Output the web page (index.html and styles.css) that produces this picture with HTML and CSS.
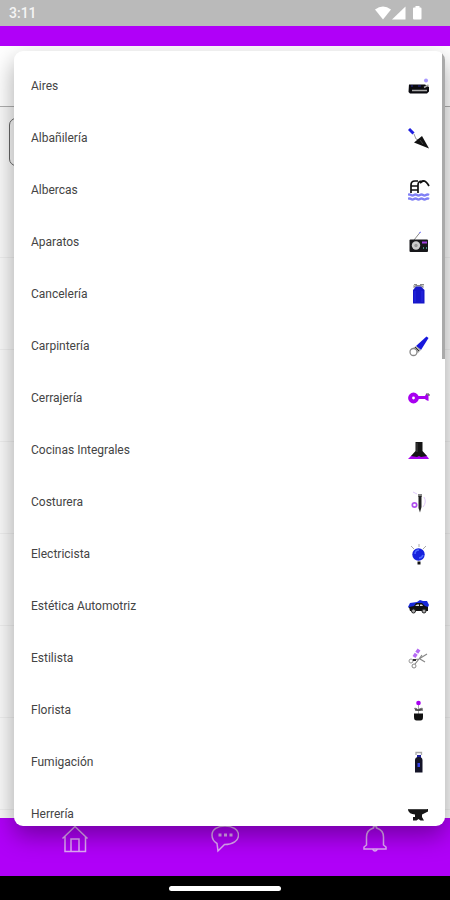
FILE: index.html
```html
<!DOCTYPE html>
<html lang="es">
<head>
<meta charset="utf-8">
<meta name="viewport" content="width=device-width, initial-scale=1">
<title>Servicios</title>
<link rel="stylesheet" href="styles.css">
</head>
<body>
<header class="status">
  <span class="clock">3:11</span>
  <svg class="status-icons" viewBox="0 0 48 16" aria-hidden="true">
    <path d="M0 4.500Q8-1.500 16 4.500L8 14.500Z"/>
    <path d="M17 14.500L30.500 1.500V14.500Z"/>
    <path d="M38 3.500q0-1 1-1h1.500V1h4v1.500h1q1 0 1 1v10q0 1-1 1h-6.500q-1 0-1-1Z"/>
  </svg>
</header>
<div class="appbar"></div>
<main class="page">
  <div class="page-head"></div>
  <div class="field"></div>
  <div class="cards">
    <div class="card"></div><div class="card"></div><div class="card"></div><div class="card"></div><div class="card"></div><div class="card"></div><div class="card"></div>
  </div>
</main>
<nav class="tabs">
  <a class="tab" href="#inicio" aria-label="Inicio"><svg viewBox="0 0 28 28"><path d="M1.500 13.500L14 1.500L26.500 13.500M4 11.500V26.500H10V14H18V26.500H24.500V11.500M10 26.500H18"/></svg></a>
  <a class="tab" href="#mensajes" aria-label="Mensajes"><svg viewBox="0 0 28 28"><path d="M6 18.500Q1 15.500 1 10C1 4.500 6.500 1 14 1S27.500 4.500 27.500 10S22 19.500 13.500 19.500L7 26Z"/><path class="dots" d="M7.500 8.500h3v3h-3zM13 8.500h3v3h-3zM18.500 8.500h3v3h-3z"/></svg></a>
  <a class="tab" href="#avisos" aria-label="Avisos"><svg viewBox="0 0 28 28"><path d="M12.500 3V1.500H15.500V3Q22.500 5 22.500 12V20L25 22V24H3V22L5.500 20V12Q5.500 5 12.500 3ZM11.500 24Q14 28 16.500 24"/></svg></a>
</nav>
<footer class="system"><span class="gesture"></span></footer>

<div class="menu">
  <div class="options">
    <button class="option">Aires<svg viewBox="0 0 22 22"><path d="M1 9.500H17L21 12V16.500L19 18.500H2L.500 17Z" fill="#0b0b10"/><path d="M4 15.500H19M16 12.500L20.500 10" stroke="#aaa" stroke-width="1.500"/><path d="M3 11h2M10 11h3" stroke="#26269a"/><circle cx="18" cy="5.500" r="2" fill="#a99aff"/></svg></button>
    <button class="option">Albañilería<svg viewBox="0 0 22 22"><path d="M1 2L5.500 6.500" stroke="#1f1fe0" stroke-width="3"/><path d="M6 7L8 12L11 13" stroke="#999" fill="none"/><path d="M14 9L6 15.500L21 21.500Z" fill="#111"/><path d="M12 13l3 4" stroke="#444"/></svg></button>
    <button class="option">Albercas<svg viewBox="0 0 22 22"><path d="M3 14V6Q3 2 7 2H10M10 14V6Q10 2 14 2Q18 1 21 7M3 7H10M3 11H10M12 4L15 2" stroke="#111" stroke-width="1.700" fill="none"/><path d="M0 16q1.500-1 3 0t3 0t3 0t3 0t3 0t3 0t3 0M0 20q1.500-1 3 0t3 0t3 0t3 0t3 0t3 0t3 0" stroke="#8080f5" stroke-width="2.500" fill="none"/></svg></button>
    <button class="option">Aparatos<svg viewBox="0 0 22 22"><path d="M6 9L12 1.500" stroke="#888"/><path d="M11 2l2-1" stroke="#8080ff"/><rect x="1.500" y="8.500" width="18.500" height="12.500" rx="1" fill="#17171a"/><circle cx="8" cy="14.500" r="4.200" fill="#ccc"/><circle cx="8" cy="14.500" r="1.700" fill="#999"/><path d="M14 11.500h5" stroke="#a040e0" stroke-width="2"/><path d="M15 17h1M18 17h1" stroke="#4b8b80" stroke-width="2"/></svg></button>
    <button class="option">Cancelería<svg viewBox="0 0 22 22"><path d="M5 2H16V5H5Z" fill="#c9c9c9"/><path d="M6 1.500H9M12 1.500H16M6 4L8 2.500H13L15 4" stroke="#888" fill="none"/><path d="M5 20.500V7L8 3.500H13L16.500 7V20.500Z" fill="#1717c9"/><path d="M7 8V19M14 8V19" stroke="#2b2be5"/></svg></button>
    <button class="option">Carpintería<svg viewBox="0 0 22 22"><path d="M18.500 1.500L20.500 3L13 15L8 11Z" fill="#1717dc"/><path d="M8 11L13 15L10 18L5 13Z" fill="#aaa"/><circle cx="5.500" cy="17" r="3.500" fill="#fff" stroke="#888" stroke-width="1.300"/><path d="M7 12l4 4" stroke="#333"/></svg></button>
    <button class="option">Cerrajería<svg viewBox="0 0 22 22"><path d="M9 9H17L18 7L20.500 8V14L18 13L17 12H9Z" fill="#a800f0"/><circle cx="5.500" cy="11" r="3.400" fill="none" stroke="#a800f0" stroke-width="4"/><path d="M18 7h3v2" stroke="#444" fill="none"/></svg></button>
    <button class="option">Cocinas Integrales<svg viewBox="0 0 22 22"><path d="M0 20Q3 16 7 15H15Q19 16 21 20Z" fill="#a800f0"/><path d="M7.500 3H14.500V12L19 17L13 18L11 17L9 18L3 17L7.500 12Z" fill="#151515"/><path d="M9 4V13" stroke="#444"/></svg></button>
    <button class="option">Costurera<svg viewBox="0 0 22 22"><path d="M5 1l4 2M16 6q3 5-1 10" stroke="#e0c9fa" fill="none"/><path d="M10 3h4v3h-4z" fill="#888"/><path d="M10.500 5H13.500V16L12 21.500L10.500 17Z" fill="#222"/><circle cx="6.500" cy="14" r="2.200" fill="none" stroke="#b050ee" stroke-width="1.700"/></svg></button>
    <button class="option">Electricista<svg viewBox="0 0 22 22"><path d="M3 3l3 3M18 3l-3 3M11 1v3" stroke="#aaa"/><circle cx="10.500" cy="11.500" r="6.200" fill="#1722dd"/><path d="M7 11q0-4 4-4M11 15q3 0 4-3" stroke="#4d68ff" stroke-width="1.500" fill="none"/><path d="M9.500 18.500h3v3h-3z" fill="#111"/></svg></button>
    <button class="option">Estética Automotriz<svg viewBox="0 0 22 22"><path d="M0 12L2 8L9 7L12 5L15 6L19 6L21 10L19 14L1 13Z" fill="#1728d8"/><path d="M1 12L6 11L8 8H14L17 11L20 12V16H2Z" fill="#111"/><path d="M7 11L9 9.500H11V11ZM12 9.500H14L15 11H12Z" fill="#ddd"/><circle cx="5.500" cy="16" r="2" fill="#aaa" stroke="#222"/><circle cx="16" cy="16" r="2" fill="#aaa" stroke="#222"/></svg></button>
    <button class="option">Estilista<svg viewBox="0 0 22 22"><path d="M6 10L11 2.500" stroke="#b56af3" stroke-width="3.500" stroke-dasharray="4 1"/><path d="M4 13L11 12L19 7M11 12L7 17M12 12L17 15M11 12L14 8" stroke="#888" stroke-width="1.200" fill="none"/><circle cx="3" cy="14" r="2" fill="none" stroke="#999"/><circle cx="6" cy="19" r="2" fill="none" stroke="#888"/><path d="M5 13h3" stroke="#333" stroke-width="2"/></svg></button>
    <button class="option">Florista<svg viewBox="0 0 22 22"><path d="M10.500 5V15" stroke="#aaa"/><circle cx="10.500" cy="4" r="2.300" fill="#a800f0"/><path d="M6 9Q9 8 10 11Q12 8 15 9Q14 12 10.500 12Q7 12 6 9Z" fill="#777"/><path d="M7 11h8" stroke="#222"/><path d="M6 14.500H15V18Q15 21.500 12.500 21.500H8.500Q6 21.500 6 18Z" fill="#111"/></svg></button>
    <button class="option">Fumigación<svg viewBox="0 0 22 22"><path d="M8 4V1.500H13.500V4" stroke="#aaa" stroke-width="1.300" fill="none"/><path d="M9 4h4v3H9z" fill="#2020a0"/><path d="M7 9Q7 6 10.700 6T14.500 9V21.500H7Z" fill="#141428"/><path d="M9.500 12h2.500v4H9.500z" fill="#3540e8"/></svg></button>
    <button class="option">Herrería<svg viewBox="0 0 22 22"><path d="M0 6H20V8.500L14 11.500V14L16 17.500H12.500L10.500 16L8.500 17.500H5V14H7V11.500Q1 11 0 7Z" fill="#161616"/><path d="M0 6.500H19" stroke="#444"/></svg></button>
  </div>
  <span class="thumb"></span>
</div>
</body>
</html>
```
FILE: styles.css
```css
* { box-sizing: border-box; }

body {
  margin: 0;
  height: 100vh;
  display: flex;
  flex-direction: column;
  position: relative;
  overflow: hidden;
  font-family: Roboto, "Liberation Sans", sans-serif;
  background: #fafafa;
}

.status {
  height: 26px;
  padding: 0 27px 0 9px;
  display: flex;
  align-items: center;
  justify-content: space-between;
  background: #bababa;
  color: #f4f4f4;
  position: relative;
  z-index: 3;
}

.clock { font-size: 14px; font-weight: 500; line-height: 26px; }

.status-icons { width: 48px; height: 16px; fill: #fff; }

.appbar {
  height: 20px;
  background: #b000f8;
  position: relative;
  z-index: 3;
}

.page { flex: 1; overflow: hidden; }

.page-head {
  height: 61px;
  background: #fff;
  border-bottom: 1px solid #b0b0b0;
}

.field {
  height: 48px;
  margin: 11px 9px 0;
  border: 1px solid #666;
  border-radius: 7px;
}

.card { height: 92px; border-bottom: 1px solid #efefef; }

.tabs {
  height: 58px;
  padding-top: 7px;
  display: grid;
  grid-template-columns: repeat(3, 1fr);
  justify-items: center;
  background: #b000f8;
}

.tab { height: 28px; }

.tab svg {
  width: 28px;
  height: 28px;
  fill: none;
  stroke: #e0a8f6;
  stroke-width: 1.5;
}

.tab .dots { fill: #e0a8f6; stroke: none; }

.system {
  height: 24px;
  display: flex;
  align-items: center;
  justify-content: center;
  background: #000;
  position: relative;
  z-index: 3;
}

.gesture {
  width: 25%;
  height: 5px;
  border-radius: 3px;
  background: #fff;
}

.menu {
  position: absolute;
  z-index: 2;
  top: 51px;
  right: 5px;
  bottom: 74px;
  left: 14px;
  border-radius: 9px;
  background: #fff;
  box-shadow: 0 10px 24px rgba(0, 0, 0, 0.35);
  overflow: hidden;
}

.options { padding: 9px 0 0; }

.option {
  width: 100%;
  height: 52px;
  padding: 0 15px 0 17px;
  display: flex;
  align-items: center;
  justify-content: space-between;
  border: 0;
  background: none;
  color: #444;
  font-family: inherit;
  font-size: 12px;
  line-height: 16px;
  text-align: left;
}

.option svg { width: 22px; height: 22px; }

.thumb {
  position: absolute;
  top: 2px;
  right: 0;
  width: 3px;
  height: calc(40% - 4px);
  background: #aaa;
}
```
